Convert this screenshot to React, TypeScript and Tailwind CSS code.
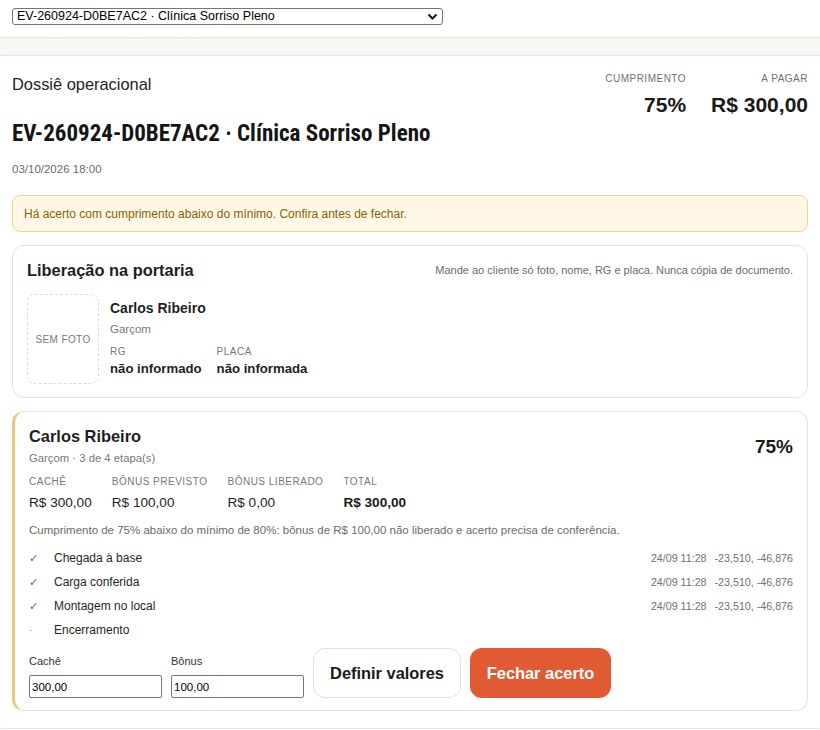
import React from "react";

const steps = [
  { done: true, label: "Chegada à base", meta: true },
  { done: true, label: "Carga conferida", meta: true },
  { done: true, label: "Montagem no local", meta: true },
  { done: false, label: "Encerramento", meta: false },
];

export default function App() {
  return (
    <div className="w-[820px] h-[730px] overflow-hidden bg-white text-[#1f1f1f]" style={{ fontFamily: '"Liberation Sans", Arial, sans-serif' }}>
      <div className="bg-[#f6f8f4] pb-[18px]">
        <div className="-mx-[6px] bg-white border-b border-x border-[#e4e6e2] rounded-b-lg px-[17px] pt-[8px] pb-[12px]">
          <div className="relative w-[431px] h-[17px] border border-[#767676] rounded-[3px] bg-white flex items-center pl-[4px] text-[12.5px] leading-none text-black">
            EV-260924-D0BE7AC2 · Clínica Sorriso Pleno
            <svg className="absolute right-[4px] top-[3px]" width="11" height="9" viewBox="0 0 11 9">
              <path d="M1.5 2.5 L5.5 6.5 L9.5 2.5" fill="none" stroke="#111" strokeWidth="2" />
            </svg>
          </div>
        </div>
      </div>
      <div className="-mt-[1px] -mx-[6px] bg-white border border-[#e4e6e2] rounded-lg pl-[17px] pr-[17px] pt-[16px] pb-[17px]">
        <div className="flex justify-between">
          <div>
            <div className="text-[16.4px] leading-[24px] text-[#222]">Dossiê operacional</div>
            <div
              className="mt-[22px] text-[23px] leading-[32px] font-bold text-[#151515]"
              style={{ fontFamily: '"Roboto Condensed", Roboto, sans-serif', fontStretch: "condensed" }}
            >
              EV-260924-D0BE7AC2 · Clínica Sorriso Pleno
            </div>
            <div className="mt-[11px] text-[11.5px] leading-[16px] text-[#6b6b6b]">03/10/2026 18:00</div>
          </div>
          <div className="flex gap-[25px]">
            <div className="text-right">
              <div className="text-[10px] leading-[14px] tracking-[0.05em] text-[#6f6f6f]">CUMPRIMENTO</div>
              <div className="mt-[6px] text-[21px] leading-[26px] font-bold text-[#1a1a1a]">75%</div>
            </div>
            <div className="text-right">
              <div className="text-[10px] leading-[14px] tracking-[0.05em] text-[#6f6f6f]">A PAGAR</div>
              <div className="mt-[6px] text-[21px] leading-[26px] font-bold text-[#1a1a1a]">R$ 300,00</div>
            </div>
          </div>
        </div>

        <div className="mt-[18px] h-[37px] flex items-center px-[11px] bg-[#fff8e6] border border-[#edd596] rounded-lg text-[12px] text-[#8a5f00]">
          Há acerto com cumprimento abaixo do mínimo. Confira antes de fechar.
        </div>

        <div className="mt-[13px] border border-[#e2e2e2] rounded-xl px-[14px] pt-[13px] pb-[13px]">
          <div className="flex justify-between items-center">
            <div className="text-[16.4px] leading-[22px] font-semibold text-[#1f1f1f]">Liberação na portaria</div>
            <div className="text-[11px] text-[#6b6b6b]">Mande ao cliente só foto, nome, RG e placa. Nunca cópia de documento.</div>
          </div>
          <div className="mt-[13px] flex gap-[11px]">
            <div className="w-[72px] h-[90px] border border-dashed border-[#dcdcdc] rounded-lg flex items-center justify-center text-[10px] tracking-[0.04em] text-[#777]">
              SEM FOTO
            </div>
            <div className="pt-[4px]">
              <div className="text-[14px] leading-[20px] font-semibold text-[#1f1f1f]">Carlos Ribeiro</div>
              <div className="mt-[3px] text-[11.5px] leading-[16px] text-[#777]">Garçom</div>
              <div className="mt-[8px] flex gap-[15px]">
                <div>
                  <div className="text-[10px] leading-[14px] tracking-[0.05em] text-[#777]">RG</div>
                  <div className="mt-[1px] text-[13.2px] leading-[18px] font-semibold text-[#1f1f1f]">não informado</div>
                </div>
                <div>
                  <div className="text-[10px] leading-[14px] tracking-[0.05em] text-[#777]">PLACA</div>
                  <div className="mt-[1px] text-[13.2px] leading-[18px] font-semibold text-[#1f1f1f]">não informada</div>
                </div>
              </div>
            </div>
          </div>
        </div>

        <div className="mt-[13px] border border-[#e2e2e2] border-l-[3px] border-l-[#e6c77d] rounded-xl pl-[14px] pr-[14px] pt-[13px] pb-[12px]">
          <div className="flex justify-between">
            <div>
              <div className="text-[16.4px] leading-[22px] font-semibold text-[#1f1f1f]">Carlos Ribeiro</div>
              <div className="mt-[3px] text-[11.3px] leading-[16px] text-[#777]">Garçom · 3 de 4 etapa(s)</div>
            </div>
            <div className="mt-[10px] text-[19px] leading-[24px] font-bold text-[#1a1a1a]">75%</div>
          </div>
          <div className="mt-[9px] flex gap-[20px]">
            {[
              ["CACHÊ", "R$ 300,00", false],
              ["BÔNUS PREVISTO", "R$ 100,00", false],
              ["BÔNUS LIBERADO", "R$ 0,00", false],
              ["TOTAL", "R$ 300,00", true],
            ].map(([l, v, b]) => (
              <div key={l as string}>
                <div className="text-[10px] leading-[14px] tracking-[0.05em] text-[#777]">{l}</div>
                <div className={"mt-[5px] text-[13.6px] leading-[18px] " + (b ? "font-bold text-[#1a1a1a]" : "text-[#1f1f1f]")}>{v}</div>
              </div>
            ))}
          </div>
          <div className="mt-[10px] text-[11.5px] leading-[16px] text-[#6b6b6b]">
            Cumprimento de 75% abaixo do mínimo de 80%: bônus de R$ 100,00 não liberado e acerto precisa de conferência.
          </div>
          <div className="mt-[8px] flex flex-col">
            {steps.map((s) => (
              <div key={s.label} className="h-[24px] flex items-center justify-between">
                <div className="flex items-center">
                  <span className={"w-[25px] text-[11px] " + (s.done ? "text-[#2e7d4f]" : "text-[#999]")}>{s.done ? "✓" : "·"}</span>
                  <span className="text-[12px] text-[#1f1f1f]">{s.label}</span>
                </div>
                {s.meta && (
                  <div className="text-[10.7px] text-[#6f6f6f] flex gap-[8px]">
                    <span>24/09 11:28</span>
                    <span>-23,510, -46,876</span>
                  </div>
                )}
              </div>
            ))}
          </div>
          <div className="mt-[6px] flex items-end gap-[9px]">
            <label className="flex flex-col">
              <span className="text-[11px] leading-[16px] text-[#333]">Cachê</span>
              <input readOnly value="300,00" className="mt-[6px] w-[133px] h-[23px] border border-[#767676] rounded-[2px] px-[2px] text-[11.5px] text-black" style={{ fontFamily: '"Liberation Sans", Arial, sans-serif' }} />
            </label>
            <label className="flex flex-col">
              <span className="text-[11px] leading-[16px] text-[#333]">Bônus</span>
              <input readOnly value="100,00" className="mt-[6px] w-[133px] h-[23px] border border-[#767676] rounded-[2px] px-[2px] text-[11.5px] text-black" style={{ fontFamily: '"Liberation Sans", Arial, sans-serif' }} />
            </label>
            <button className="w-[148px] h-[50px] border border-[#e0e0e0] rounded-xl bg-white text-[16.4px] font-bold text-[#1a1a1a]">Definir valores</button>
            <button className="w-[141px] h-[50px] rounded-xl bg-[#e05a33] text-[16.4px] font-bold text-white">Fechar acerto</button>
          </div>
        </div>
      </div>
    </div>
  );
}
